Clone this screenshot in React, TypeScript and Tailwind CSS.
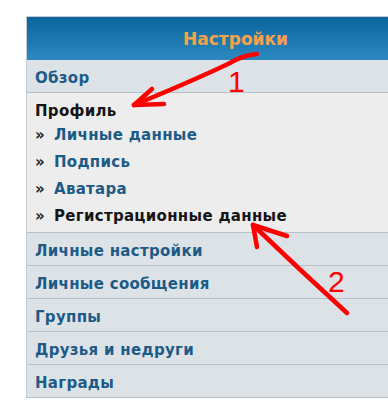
import React from 'react';

const font = { fontFamily: '"DejaVu Sans", Verdana, sans-serif' };

const topRows = ['Обзор'];
const bottomRows = ['Личные настройки', 'Личные сообщения', 'Группы', 'Друзья и недруги', 'Награды'];
const profileLinks = [
    { label: 'Личные данные', active: false },
    { label: 'Подпись', active: false },
    { label: 'Аватара', active: false },
    { label: 'Регистрационные данные', active: true },
];

function Row({ label }: { label: string }) {
    return (
        <div className="h-[33px] flex items-center pl-[8px] pt-[4px] bg-[#dde2e7] border-b border-[#b4c2ce] text-[15px] tracking-[0.3px] font-bold text-[#1d5b87]">
            {label}
        </div>
    );
}

export default function App() {
    return (
        <div className="relative w-[388px] h-[400px] overflow-hidden bg-white pt-[16px] pl-[26px]" style={font}>
            <div className="w-[418px] border-l border-t border-[#c3ccd5]">
                {/* header */}
                <div className="h-[43px] flex items-center justify-center pt-[3px] bg-gradient-to-b from-[#0a659c] to-[#2c89c0] text-[17px] font-bold text-[#f6a24c]">
                    Настройки
                </div>

                {topRows.map((r) => (
                    <Row key={r} label={r} />
                ))}

                {/* current section */}
                <div className="bg-[#ededed] border-b border-[#b4c2ce] pl-[8px] pt-[8px] pb-[2px] text-[15px] tracking-[0.3px] font-bold">
                    <div className="h-[21px] flex items-center text-[#151515]">Профиль</div>
                    {profileLinks.map((l) => (
                        <div key={l.label} className="h-[27px] flex items-center">
                            <span className="text-[#222] w-[19px]">»</span>
                            <span className={l.active ? 'text-[#151515]' : 'text-[#1d5b87]'}>{l.label}</span>
                        </div>
                    ))}
                </div>

                {bottomRows.map((r) => (
                    <Row key={r} label={r} />
                ))}
            </div>

            {/* red annotations drawn on top */}
            <svg className="absolute inset-0 pointer-events-none" width="388" height="400" viewBox="0 0 388 400">
                <g fill="none" stroke="#ff0000" strokeWidth="4.5" strokeLinecap="round" strokeLinejoin="round">
                    <path d="M257 54 Q243 55 228 64 Q190 82 134 105" />
                    <path d="M134 105 L152 89" />
                    <path d="M134 105 L164 104" />
                    <path d="M347 313 Q300 270 253 225" />
                    <path d="M253 225 L257 247" />
                    <path d="M253 225 L287 236" />
                </g>
            </svg>
            <span className="absolute left-[228px] top-[67px] text-[30px] leading-none text-[#ff0000]" style={{ fontFamily: '"Liberation Sans", Arial, sans-serif' }}>
                1
            </span>
            <span className="absolute left-[328px] top-[267px] text-[30px] leading-none text-[#ff0000]" style={{ fontFamily: '"Liberation Sans", Arial, sans-serif' }}>
                2
            </span>
        </div>
    );
}
